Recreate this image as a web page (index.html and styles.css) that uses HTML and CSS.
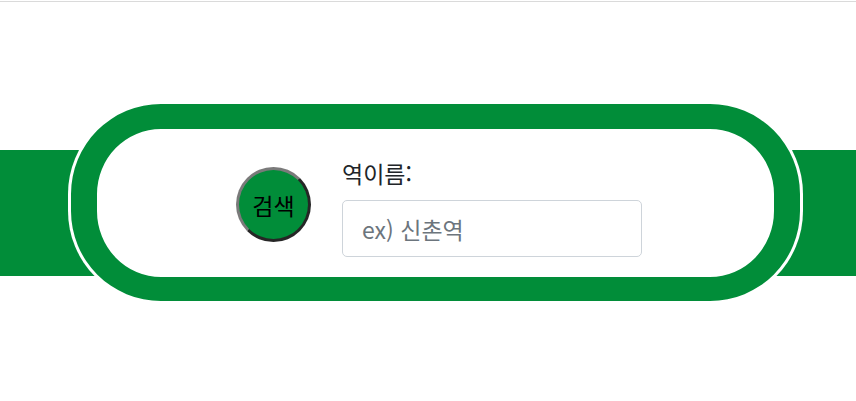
FILE: index.html
```html
<!DOCTYPE html>
<html lang="ko">
<head>
<meta charset="utf-8">
<title>역 검색</title>
<link rel="stylesheet" href="styles.css">
</head>
<body>
<div class="topline"></div>
<main class="stage">
  <div class="pill">
    <button class="search-btn" type="button">검색</button>
    <div class="field">
      <label class="field-label" for="station">역이름:</label>
      <input class="field-input" id="station" type="text" placeholder="ex) 신촌역">
    </div>
  </div>
</main>
</body>
</html>
```
FILE: styles.css
```css
* { box-sizing: border-box; }
html, body { margin: 0; padding: 0; background: #fff; }
body {
  font-family: "Noto Sans CJK KR", "Noto Sans", sans-serif;
  color: #212529;
}
.topline {
  margin-top: 1px;
  height: 1px;
  background: #dadada;
}
.stage {
  margin-top: 102px;
  height: 197px;
  background: linear-gradient(to bottom,
    transparent 0, transparent 46px,
    #018d39 46px, #018d39 172px,
    transparent 172px);
}
.pill {
  margin-left: 71px;
  width: 729px;
  height: 197px;
  border: 26px solid #018d39;
  border-top-width: 25px;
  border-bottom-width: 24px;
  border-radius: 90px;
  background: #fff;
  box-shadow: 0 0 0 3px #fff;
  display: flex;
  align-items: flex-start;
  padding-left: 139px;
}
.search-btn {
  margin-top: 38px;
  width: 75px;
  height: 75px;
  border-radius: 50%;
  border: 3px solid;
  border-color: #7a7a7a #262626 #262626 #7a7a7a;
  background: #018d39;
  color: #000;
  font-family: inherit;
  font-size: 23px;
  padding: 0;
  flex: none;
}
.field {
  margin-top: 28px;
  margin-left: 31px;
  display: flex;
  flex-direction: column;
}
.field-label {
  font-size: 23px;
  line-height: 32px;
  margin-bottom: 11px;
}
.field-input {
  width: 300px;
  height: 57px;
  border: 1px solid #ced4da;
  border-radius: 5px;
  padding: 0 19px;
  font-family: inherit;
  font-size: 23px;
  color: #495057;
}
.field-input::placeholder { color: #6c757d; }
```
